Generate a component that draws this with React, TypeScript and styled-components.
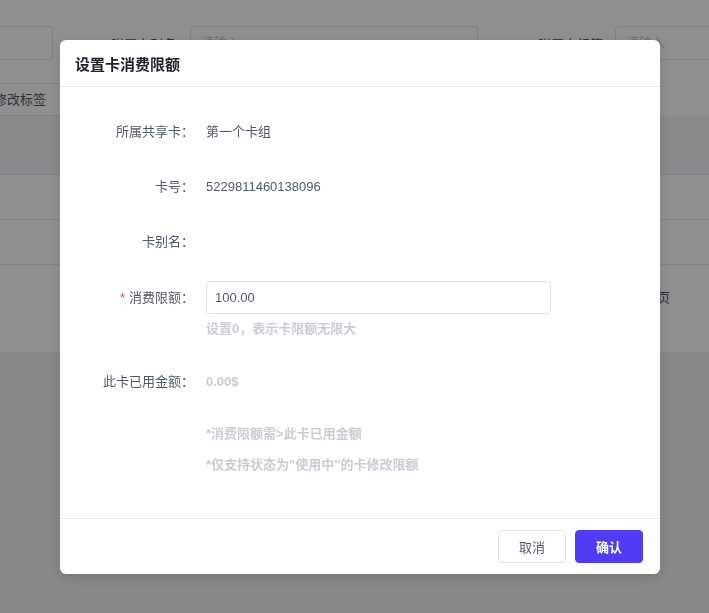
import React from "react";
import styled, { createGlobalStyle } from "styled-components";

const GlobalStyle = createGlobalStyle`
  html, body { margin: 0; padding: 0; background: #f1f2f4; }
  body { font-family: "Liberation Sans", Arial, "Noto Sans CJK SC", sans-serif; font-size: 13px; color: #4e5969; }
  * { box-sizing: border-box; }
`;

/* ---------- background page ---------- */
const Page = styled.div`
  width: 709px;
  height: 613px;
  overflow: hidden;
  background: #f1f2f4;
`;

const Panel = styled.div`
  background: #ffffff;
  height: 352px;
  display: flex;
  flex-direction: column;
`;

const FilterRow = styled.div`
  display: flex;
  align-items: center;
  height: 34px;
  margin-top: 26px;
`;

const FilterLabel = styled.span<{ $ml: number }>`
  margin-left: ${(p) => p.$ml}px;
  width: 65px;
  flex-shrink: 0;
  text-align: right;
  color: #4e5969;
  font-size: 13px;
`;

const FilterInput = styled.div<{ $w: number; $ml: number; $cut?: boolean }>`
  margin-left: ${(p) => p.$ml}px;
  width: ${(p) => p.$w}px;
  flex-shrink: 0;
  height: 34px;
  border: 1px solid #e5e6eb;
  border-left: ${(p) => (p.$cut ? "none" : "1px solid #e5e6eb")};
  border-radius: ${(p) => (p.$cut ? "0 4px 4px 0" : "4px")};
  color: #c9cdd4;
  padding-left: 10px;
  line-height: 32px;
  font-size: 13px;
`;

const Toolbar = styled.div`
  display: flex;
  margin-top: 23px;
`;

const GhostButton = styled.div`
  margin-left: -58px;
  height: 33px;
  padding: 0 24px 0 26px;
  border: 1px solid #e5e6eb;
  border-left: none;
  line-height: 31px;
  color: #4e5969;
  font-size: 13px;
`;

const TableHead = styled.div`
  height: 59px;
  background: #f5f6f8;
  border-bottom: 1px solid #e5e6eb;
`;

const TableRow = styled.div`
  height: 45px;
  border-bottom: 1px solid #e5e6eb;
`;

const Pager = styled.div`
  display: flex;
  justify-content: flex-end;
  padding: 22px 39px 0 0;
  color: #4e5969;
  font-size: 13px;
`;

/* ---------- modal ---------- */
const Overlay = styled.div`
  position: fixed;
  inset: 0;
  background: rgba(0, 0, 0, 0.44);
  display: flex;
  justify-content: center;
  align-items: flex-start;
  padding: 40px 0 0 11px;
`;

const Modal = styled.div`
  width: 600px;
  background: #ffffff;
  border-radius: 6px;
  box-shadow: 0 4px 14px rgba(0, 0, 0, 0.12);
  display: flex;
  flex-direction: column;
  overflow: hidden;
`;

const Header = styled.div`
  height: 47px;
  padding: 0 15px;
  display: flex;
  align-items: center;
  border-bottom: 1px solid #e9eaed;
`;

const Title = styled.h2`
  margin: 0;
  font-size: 15px;
  font-weight: 700;
  color: #1d2129;
`;

const Body = styled.div`
  padding: 29px 0 44px;
  display: flex;
  flex-direction: column;
`;

const Row = styled.div<{ $mb: number }>`
  display: flex;
  align-items: flex-start;
  margin-bottom: ${(p) => p.$mb}px;
`;

const Label = styled.div<{ $h?: number }>`
  width: 134px;
  flex-shrink: 0;
  height: ${(p) => p.$h ?? 32}px;
  line-height: ${(p) => p.$h ?? 32}px;
  text-align: right;
  color: #4e5969;
  font-size: 13px;
  white-space: nowrap;
`;

const Required = styled.span`
  color: #f53f3f;
  margin-right: 4px;
`;

const Content = styled.div`
  margin-left: 12px;
  display: flex;
  flex-direction: column;
`;

const Value = styled.div<{ $muted?: boolean }>`
  height: 32px;
  line-height: 32px;
  font-size: 13px;
  color: ${(p) => (p.$muted ? "#c9cdd4" : "#4e5969")};
  font-weight: ${(p) => (p.$muted ? 600 : 400)};
`;

const Input = styled.input`
  width: 345px;
  height: 33px;
  border: 1px solid #dfe1e6;
  border-radius: 4px;
  padding: 0 8px;
  font-family: inherit;
  font-size: 13px;
  color: #4e5969;
  outline: none;
  background: #fff;
`;

const Hint = styled.div<{ $mt: number }>`
  margin-top: ${(p) => p.$mt}px;
  line-height: 18px;
  font-size: 13px;
  color: #c9cdd4;
  font-weight: 600;
`;

const Notes = styled.div`
  margin-left: 146px;
  display: flex;
  flex-direction: column;
`;

const Footer = styled.div`
  height: 56px;
  border-top: 1px solid #e9eaed;
  display: flex;
  align-items: center;
  justify-content: flex-end;
  gap: 9px;
  padding: 0 17px 0 0;
`;

const Button = styled.button<{ $primary?: boolean }>`
  width: 68px;
  height: 33px;
  border-radius: 4px;
  font-family: inherit;
  font-size: 13px;
  cursor: pointer;
  border: 1px solid ${(p) => (p.$primary ? "#503cf6" : "#e1e3e8")};
  background: ${(p) => (p.$primary ? "#503cf6" : "#ffffff")};
  color: ${(p) => (p.$primary ? "#ffffff" : "#4e5969")};
  font-weight: ${(p) => (p.$primary ? 700 : 400)};
`;

export default function App() {
  return (
    <>
      <GlobalStyle />
      <Page>
        <Panel>
          <FilterRow>
            <FilterInput $w={53} $ml={0} $cut />
            <FilterLabel $ml={58}>附属卡别名</FilterLabel>
            <FilterInput $w={288} $ml={14}>请输入</FilterInput>
            <FilterLabel $ml={60}>附属卡标签</FilterLabel>
            <FilterInput $w={140} $ml={12}>请输入</FilterInput>
          </FilterRow>
          <Toolbar>
            <GhostButton>批量修改标签</GhostButton>
          </Toolbar>
          <TableHead />
          <TableRow />
          <TableRow />
          <Pager>前往 1 页</Pager>
        </Panel>
      </Page>
      <Overlay>
        <Modal>
          <Header>
            <Title>设置卡消费限额</Title>
          </Header>
          <Body>
            <Row $mb={23}>
              <Label>所属共享卡：</Label>
              <Content>
                <Value>第一个卡组</Value>
              </Content>
            </Row>
            <Row $mb={23}>
              <Label>卡号：</Label>
              <Content>
                <Value>5229811460138096</Value>
              </Content>
            </Row>
            <Row $mb={23}>
              <Label>卡别名：</Label>
              <Content>
                <Value />
              </Content>
            </Row>
            <Row $mb={28}>
              <Label $h={33}>
                <Required>*</Required>消费限额：
              </Label>
              <Content>
                <Input defaultValue="100.00" />
                <Hint $mt={6}>设置0，表示卡限额无限大</Hint>
              </Content>
            </Row>
            <Row $mb={27}>
              <Label>此卡已用金额：</Label>
              <Content>
                <Value $muted>0.00$</Value>
              </Content>
            </Row>
            <Notes>
              <Hint $mt={0}>*消费限额需&gt;此卡已用金额</Hint>
              <Hint $mt={13}>*仅支持状态为"使用中"的卡修改限额</Hint>
            </Notes>
          </Body>
          <Footer>
            <Button>取消</Button>
            <Button $primary>确认</Button>
          </Footer>
        </Modal>
      </Overlay>
    </>
  );
}
